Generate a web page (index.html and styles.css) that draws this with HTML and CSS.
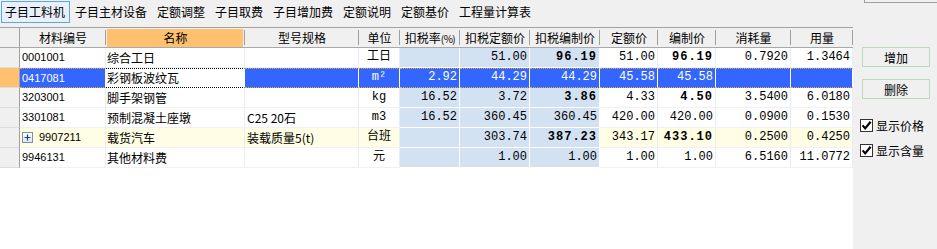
FILE: index.html
```html
<!DOCTYPE html>
<html lang="zh-CN">
<head>
<meta charset="utf-8">
<title>子目工料机</title>
<link rel="stylesheet" href="styles.css">
</head>
<body>
<div class="app">
  <div class="tabbar">
    <div class="tabs">
      <span class="tab active">子目工料机</span>
      <span class="tab">子目主材设备</span>
      <span class="tab">定额调整</span>
      <span class="tab">子目取费</span>
      <span class="tab">子目增加费</span>
      <span class="tab">定额说明</span>
      <span class="tab">定额基价</span>
      <span class="tab">工程量计算表</span>
    </div>
    <div class="corner"></div>
  </div>
  <div class="main">
    <div class="grid">
      <div class="row head">
        <div class="h sel"></div>
        <div class="h">材料编号</div>
        <div class="h hl">名称</div>
        <div class="h">型号规格</div>
        <div class="h">单位</div>
        <div class="h">扣税率<span class="pct">(%)</span></div>
        <div class="h">扣税定额价</div>
        <div class="h">扣税编制价</div>
        <div class="h">定额价</div>
        <div class="h">编制价</div>
        <div class="h">消耗量</div>
        <div class="h">用量</div>
      </div>

      <div class="row">
        <div class="c sel"></div>
        <div class="c code">0001001</div>
        <div class="c name">综合工日</div>
        <div class="c spec"></div>
        <div class="c unit">工日</div>
        <div class="c n tax"></div>
        <div class="c n tax">51.00</div>
        <div class="c n tax b">96.19</div>
        <div class="c n">51.00</div>
        <div class="c n b">96.19</div>
        <div class="c n">0.7920</div>
        <div class="c n">1.3464</div>
      </div>

      <div class="row selected">
        <div class="c sel"></div>
        <div class="c code">0417081</div>
        <div class="c name focus">彩钢板波纹瓦</div>
        <div class="c spec"></div>
        <div class="c unit">m²</div>
        <div class="c n tax">2.92</div>
        <div class="c n tax">44.29</div>
        <div class="c n tax">44.29</div>
        <div class="c n">45.58</div>
        <div class="c n">45.58</div>
        <div class="c n"></div>
        <div class="c n"></div>
      </div>

      <div class="row">
        <div class="c sel"></div>
        <div class="c code">3203001</div>
        <div class="c name">脚手架钢管</div>
        <div class="c spec"></div>
        <div class="c unit">kg</div>
        <div class="c n tax">16.52</div>
        <div class="c n tax">3.72</div>
        <div class="c n tax b">3.86</div>
        <div class="c n">4.33</div>
        <div class="c n b">4.50</div>
        <div class="c n">3.5400</div>
        <div class="c n">6.0180</div>
      </div>

      <div class="row">
        <div class="c sel"></div>
        <div class="c code">3301081</div>
        <div class="c name">预制混凝土座墩</div>
        <div class="c spec">C25 20石</div>
        <div class="c unit">m3</div>
        <div class="c n tax">16.52</div>
        <div class="c n tax">360.45</div>
        <div class="c n tax">360.45</div>
        <div class="c n">420.00</div>
        <div class="c n">420.00</div>
        <div class="c n">0.0900</div>
        <div class="c n">0.1530</div>
      </div>

      <div class="row yellow">
        <div class="c sel"></div>
        <div class="c code"><span class="expand"><svg width="9" height="9" viewBox="0 0 9 9"><path d="M1.5 4.5H7.5M4.5 1.5V7.5" stroke="#1c3f8c" stroke-width="1.2"/></svg></span>9907211</div>
        <div class="c name">载货汽车</div>
        <div class="c spec">装载质量5(t)</div>
        <div class="c unit">台班</div>
        <div class="c n tax"></div>
        <div class="c n tax">303.74</div>
        <div class="c n tax b">387.23</div>
        <div class="c n">343.17</div>
        <div class="c n b">433.10</div>
        <div class="c n">0.2500</div>
        <div class="c n">0.4250</div>
      </div>

      <div class="row">
        <div class="c sel"></div>
        <div class="c code">9946131</div>
        <div class="c name">其他材料费</div>
        <div class="c spec"></div>
        <div class="c unit">元</div>
        <div class="c n tax"></div>
        <div class="c n tax">1.00</div>
        <div class="c n tax">1.00</div>
        <div class="c n">1.00</div>
        <div class="c n">1.00</div>
        <div class="c n">6.5160</div>
        <div class="c n">11.0772</div>
      </div>
    </div>

    <div class="side">
      <button class="btn">增加</button>
      <button class="btn">删除</button>
      <label class="chk first"><span class="box"><svg width="11" height="11" viewBox="0 0 11 11"><path d="M1.6 5.4 L4.2 8.4 L9.6 1.8" stroke="#000" stroke-width="2.2" fill="none"/></svg></span>显示价格</label>
      <label class="chk"><span class="box"><svg width="11" height="11" viewBox="0 0 11 11"><path d="M1.6 5.4 L4.2 8.4 L9.6 1.8" stroke="#000" stroke-width="2.2" fill="none"/></svg></span>显示含量</label>
    </div>
  </div>
</div>
</body>
</html>
```

FILE: styles.css
```css
* {
  box-sizing: border-box;
  margin: 0;
  padding: 0;
}

html,
body {
  width: 937px;
  height: 249px;
  overflow: hidden;
}

body {
  background: #f0f0f0;
  font-family: "Noto Sans CJK SC", sans-serif;
  font-size: 12px;
  color: #000;
}

.app {
  display: flex;
  flex-direction: column;
  height: 249px;
}

/* ---------- tab bar ---------- */
.tabbar {
  height: 27px;
  display: flex;
  align-items: flex-start;
  padding: 1px 0 0 1px;
}

.tabs {
  display: flex;
  gap: 1px;
}

.tab {
  height: 22px;
  line-height: 20px;
  padding: 0 4px 0 3px;
  border: 1px solid transparent;
  white-space: nowrap;
}

.tab.active {
  border-color: #5ca6e6;
  background: #e8f1fa;
}

.corner {
  margin-left: auto;
  margin-top: -1px;
  width: 73px;
  height: 3px;
  border-left: 1px solid #a0a0a0;
  border-bottom: 1px solid #a0a0a0;
}

/* ---------- main ---------- */
.main {
  flex: 1;
  display: flex;
}

.grid {
  width: 853px;
  background: #fff;
  border-top: 1px solid #a0a0a0;
}

.row {
  display: grid;
  grid-template-columns: 20px 86px 139px 114px 41px 60px 70px 70px 58px 58px 75px 62px;
  height: 20px;
}

/* header */
.h {
  height: 20px;
  line-height: 19px;
  text-align: center;
  white-space: nowrap;
  overflow: hidden;
  border-bottom: 1px solid #a9a9a9;
  background: linear-gradient(#a0a0a0, #a0a0a0) right center / 1px 15px no-repeat, #f0f0f0;
}

.h.hl {
  background: linear-gradient(#a0a0a0, #a0a0a0) right center / 1px 15px no-repeat, linear-gradient(#ffc170, #ffc170) 1px 1px / calc(100% - 3px) 100% no-repeat, #f0f0f0;
}

.h.sel {
  background: #f0f0f0;
  border-right: 1px solid #a0a0a0;
}

.pct {
  font-size: 10px;
  letter-spacing: -0.5px;
}

/* cells */
.c {
  height: 20px;
  line-height: 19px;
  padding: 0 2px;
  white-space: nowrap;
  overflow: hidden;
  border-right: 1px solid #e8edf5;
  border-bottom: 1px solid #eef2f8;
}

.c.sel {
  background: #f0f0f0;
  border-right: 1px solid #a0a0a0;
  border-bottom: 1px solid #dcdcdc;
}

.code {
  font-family: "Liberation Sans", sans-serif;
  font-size: 11px;
  display: flex;
  align-items: center;
}

.name {
  padding-left: 1px;
}

.unit {
  text-align: center;
  font-family: "Liberation Mono", "Noto Sans CJK SC", monospace;
}

.n {
  text-align: right;
  font-family: "Liberation Mono", monospace;
  font-size: 12px;
  padding-right: 2px;
}

.b {
  font-weight: bold;
  letter-spacing: 1px;
}

.tax {
  background: #d3e2f2;
  border-right-color: #fff;
  border-bottom-color: #fff;
}

.expand {
  display: inline-flex;
  align-items: center;
  justify-content: center;
  width: 11px;
  height: 11px;
  border: 1px solid #7b8fb0;
  background: linear-gradient(#ffffff, #dfe6f0);
  margin: 0 6px 0 0;
}

/* yellow row */
.yellow .c:not(.sel):not(.tax) {
  background: #fffde3;
}

/* selected row */
.selected .c:not(.sel) {
  background: #3366ff;
  color: #fff;
  border-top: 1px dotted #e7a23a;
  border-bottom: 1px dotted #e7a23a;
  border-right-color: #fff;
  line-height: 17px;
}

.selected .c.sel {
  background: #ffc170;
}

.selected .c.focus {
  background: #fff;
  color: #000;
  border-top: 1px dotted #000;
  border-bottom: 1px dotted #000;
}

/* ---------- side panel ---------- */
.side {
  flex: 1;
  display: flex;
  flex-direction: column;
  align-items: flex-start;
  gap: 12px;
  padding: 20px 0 0 9px;
}

.btn {
  width: 68px;
  height: 20px;
  border: 1px solid #b8dcb8;
  background: #f0f0f0;
  font-family: "Noto Sans CJK SC", sans-serif;
  font-size: 12px;
  line-height: 17px;
  color: #000;
}

.chk {
  display: flex;
  align-items: center;
  height: 13px;
  margin-left: -2px;
  line-height: 13px;
  white-space: nowrap;
}

.chk.first {
  margin-top: 8px;
}

.box {
  display: inline-flex;
  align-items: center;
  justify-content: center;
  width: 13px;
  height: 13px;
  border: 1px solid #333;
  background: #fff;
  margin-right: 3px;
}
```
